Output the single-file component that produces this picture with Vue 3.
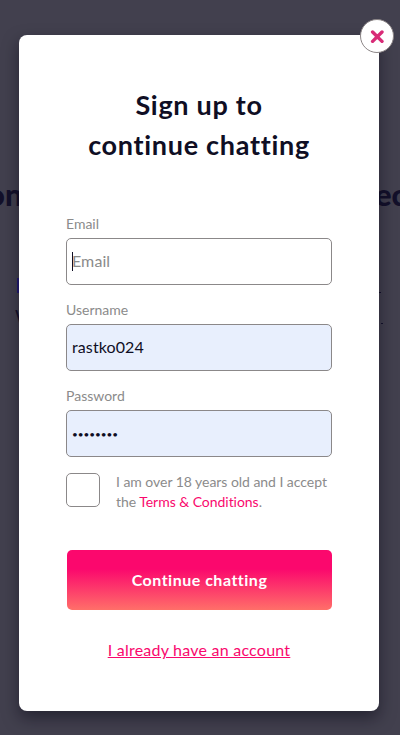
<template>
  <div class="page">
    <!-- Page content dimmed behind the modal -->
    <div class="backdrop" aria-hidden="true">
      <span class="back-title left">on</span>
      <span class="back-title right">ec</span>
      <span class="back-mark"></span>
      <span class="back-text">W</span>
      <span class="back-dot one"></span>
      <span class="back-dot two"></span>
    </div>

    <div class="modal">
      <button class="close" aria-label="Close">
        <svg width="14" height="14" viewBox="0 0 14 14">
          <path d="M2.6 3L12 12.4M12 3L2.6 12.4" fill="none" stroke="#d82b77" stroke-width="3.4" stroke-linecap="round" />
        </svg>
      </button>

      <h1 class="title">Sign up to<br />continue chatting</h1>

      <form class="form" @submit.prevent>
        <div v-for="field in fields" :key="field.name" class="field">
          <label class="label" :for="field.name">{{ field.label }}</label>
          <div class="control">
            <input
              :id="field.name"
              v-model="field.value"
              class="input"
              :class="[field.name, { filled: field.value }]"
              type="text"
              :placeholder="field.placeholder"
            />
            <span v-if="field.name === 'email'" class="caret"></span>
          </div>
        </div>

        <div class="terms">
          <span class="checkbox" role="checkbox" :aria-checked="accepted" @click="accepted = !accepted"></span>
          <p class="terms-text">
            I am over 18 years old and I accept<br />
            the <a class="link">Terms &amp; Conditions</a>.
          </p>
        </div>

        <button class="submit" type="submit">Continue chatting</button>
      </form>

      <a class="account">I already have an account</a>
    </div>
  </div>
</template>

<script setup>
import { reactive, ref } from 'vue'

const accepted = ref(false)
const fields = reactive([
  { name: 'email', label: 'Email', placeholder: 'Email', value: '' },
  { name: 'username', label: 'Username', placeholder: '', value: 'rastko024' },
  { name: 'password', label: 'Password', placeholder: '', value: '••••••••' },
])
</script>

<style>
body { margin: 0; background: #42404e; }
</style>

<style scoped>
* { box-sizing: border-box; }

.page {
  position: relative;
  height: 735px;
  padding: 35px 21px 0 19px;
  overflow: hidden;
  background: #42404e;
  font-family: Lato, "Open Sans", sans-serif;
  font-variant-ligatures: none;
}

.backdrop { position: absolute; inset: 0; }
.back-title {
  position: absolute;
  top: 175px;
  font-size: 31px;
  line-height: 38px;
  font-weight: 900;
  color: #13102a;
}
.back-title.left { left: -13px; }
.back-title.right { left: 375px; }
.back-mark { position: absolute; left: 17px; top: 278px; width: 4px; height: 15px; background: #211a73; }
.back-text { position: absolute; left: 15px; top: 304px; font-size: 18px; line-height: 24px; color: #13102a; }
.back-dot { position: absolute; width: 2px; height: 1px; background: #13102a; }
.back-dot.one { left: 379px; top: 292px; }
.back-dot.two { left: 381px; top: 323px; }

.modal {
  position: relative;
  height: 676px;
  padding: 50px 47px 0;
  background: #fff;
  border-radius: 8px;
  box-shadow: 0 7px 16px rgba(10, 8, 22, 0.5);
}

.close {
  position: absolute;
  top: -16px;
  right: -15px;
  display: flex;
  align-items: center;
  justify-content: center;
  width: 34px;
  height: 34px;
  padding: 0;
  border: 1px solid #8b8586;
  border-radius: 50%;
  background: #fff;
  cursor: pointer;
}

.title {
  margin: 0 -20px;
  font-size: 27px;
  line-height: 40px;
  font-weight: 700;
  letter-spacing: 0.7px;
  text-align: center;
  color: #0f0e24;
  white-space: nowrap;
}

.form { margin-top: 49px; }
.field { height: 86px; }
.label {
  display: block;
  height: 24px;
  font-size: 14px;
  line-height: 20px;
  color: #8b8b8b;
}
.control { position: relative; width: 266px; }
.input {
  display: block;
  width: 266px;
  height: 47px;
  margin: 0;
  padding: 0 5px 2px;
  border: 1px solid #8b8889;
  border-radius: 5px;
  outline: none;
  background: #fff;
  font-family: inherit;
  font-size: 16px;
  font-variant-ligatures: none;
  letter-spacing: 0.1px;
  color: #0f0e24;
}
.input.filled { background: #e8effd; }
.input.password { font-size: 10px; letter-spacing: -0.05px; padding: 0 5px; }
.input::placeholder { color: #8b8b8b; opacity: 1; }
.caret { position: absolute; left: 6px; top: 14px; width: 1px; height: 19px; background: #0f0e24; }

.terms { display: flex; gap: 16px; width: 276px; margin-top: 1px; }
.checkbox { flex: none; width: 34px; height: 34px; border: 1px solid #8b8889; border-radius: 5px; }
.terms-text {
  margin: -1px 0 0;
  font-size: 14px;
  line-height: 20px;
  letter-spacing: -0.04px;
  color: #8b8b8b;
  white-space: nowrap;
}
.link { color: #f9086d; }

.submit {
  display: block;
  width: 265px;
  height: 60px;
  margin: 38px 0 0 1px;
  padding: 0 0 2px;
  border: none;
  border-radius: 5px;
  background: linear-gradient(180deg, #fb086d 0%, #fb086d 32%, #ff6f69 100%);
  font-family: inherit;
  font-size: 16px;
  font-variant-ligatures: none;
  font-weight: 700;
  letter-spacing: 0.5px;
  color: #fff;
  cursor: pointer;
}
.account {
  display: block;
  margin-top: 30px;
  font-size: 16px;
  line-height: 20px;
  letter-spacing: 0.23px;
  text-align: center;
  text-decoration: underline;
  color: #f9086d;
}
</style>
